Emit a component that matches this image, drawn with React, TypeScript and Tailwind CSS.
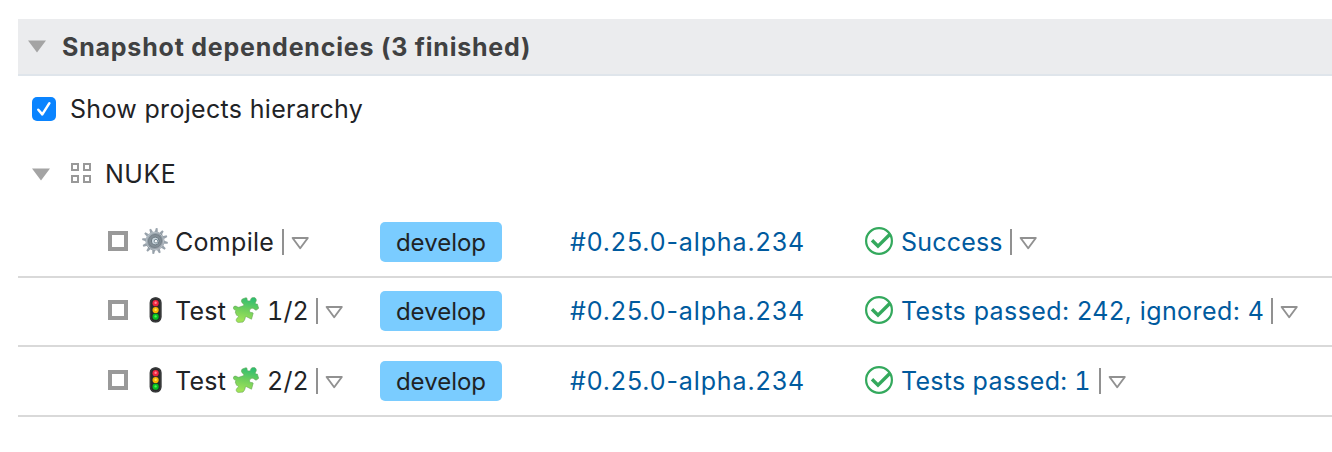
import type { ReactNode } from "react";

function Caret() {
  return (
    <svg width="18" height="13" viewBox="0 0 18 13" className="block shrink-0">
      <path d="M0 0.5H18L9 12.5Z" fill="#a4a4a4" />
    </svg>
  );
}

function MenuHandle() {
  return (
    <span className="flex shrink-0 items-center">
      <span className="h-[26px] w-[2px] bg-[#919191]" />
      <svg width="18" height="13" viewBox="0 0 18 13" className="mt-[3px] ml-[7px] block">
        <path d="M1.6 1H16.8L9.2 11.2Z" fill="none" stroke="#919191" strokeWidth="1.9" strokeLinejoin="round" />
      </svg>
    </span>
  );
}

function ProjectIcon() {
  return (
    <svg width="20" height="20" viewBox="0 0 20 20" className="block shrink-0" fill="none" stroke="#999999" strokeWidth="2">
      <path d="M1 1H7V7H1ZM13 1H19V7H13ZM1 13H7V19H1ZM13 13H19V19H13Z" />
    </svg>
  );
}

function StatusIcon() {
  return (
    <svg width="28" height="28" viewBox="0 0 28 28" className="mb-[2px] block shrink-0" fill="none" stroke="#34a95d">
      <circle cx="14" cy="14" r="12.9" strokeWidth="2.2" />
      <path d="M7 13.2L13 19.1L25.5 6.8" strokeWidth="3.4" />
    </svg>
  );
}

const teeth = Array.from({ length: 12 }, (_, i) => i * 30);

function Gear() {
  return (
    <svg width="26" height="26" viewBox="0 0 26 26" className="mb-[2px] block shrink-0">
      <defs>
        <linearGradient id="steel" x1="0" y1="0" x2="1" y2="1">
          <stop offset="0" stopColor="#b3bec6" />
          <stop offset="0.5" stopColor="#87929a" />
          <stop offset="1" stopColor="#b0b3bb" />
        </linearGradient>
      </defs>
      {teeth.map((angle) => (
        <path key={angle} d="M11.4 4.5L12.1 0.1H13.9L14.6 4.5Z" fill="#98a2ab" transform={`rotate(${angle + 8} 13 13)`} />
      ))}
      <circle cx="13" cy="13" r="9.6" fill="url(#steel)" />
      <circle cx="13" cy="13" r="8.6" fill="none" stroke="#b7c0c7" strokeWidth="1" />
      <circle cx="13" cy="13" r="6.5" fill="#848f97" stroke="#707b84" strokeWidth="0.8" />
      <circle cx="13.2" cy="13" r="3.9" fill="#c9d5dd" stroke="#5b6871" strokeWidth="0.8" />
      <circle cx="14" cy="13.2" r="1.8" fill="#f7f9fb" stroke="#71838f" strokeWidth="0.9" />
    </svg>
  );
}

function TrafficLight() {
  return (
    <svg width="26" height="26" viewBox="0 0 26 26" className="mb-[2px] block shrink-0">
      <rect x="7.6" y="0.2" width="12" height="25.4" rx="5.5" fill="#292a2c" />
      <rect x="8.5" y="1.1" width="10.2" height="23.6" rx="4.8" fill="none" stroke="#414244" strokeWidth="0.8" />
      <circle cx="13.6" cy="6.2" r="3.1" fill="#ef2340" />
      <circle cx="13.6" cy="5.8" r="1.2" fill="#ff8895" />
      <circle cx="13.6" cy="13" r="3.1" fill="#f7b500" />
      <circle cx="13.6" cy="12.7" r="1.2" fill="#ffe35b" />
      <circle cx="13.6" cy="19.7" r="3.1" fill="#08bd1e" />
      <circle cx="13.6" cy="19.4" r="1.2" fill="#4df05c" />
    </svg>
  );
}

function Puzzle() {
  return (
    <svg width="26" height="26" viewBox="0 0 26 26" className="mb-[2px] block shrink-0">
      <defs>
        <linearGradient id="leaf" x1="0.6" y1="0" x2="0.4" y2="1">
          <stop offset="0" stopColor="#2dbd72" />
          <stop offset="0.5" stopColor="#70cf5c" />
          <stop offset="1" stopColor="#a4e557" />
        </linearGradient>
      </defs>
      <path
        d="M9.3 2L13 0.7C14.6 .6 13.6 2.9 14.8 3.7C16.1 4.4 17.3 3.8 17.7 2.4C18.1 .7 19.9 0 21.5.6C23.4 1.4 23.8 3.5 22.7 4.9C21.7 6.3 22.8 7.3 24.3 7L25.7 11.3L23.4 13C21.6 13.5 21.7 11.6 19.8 11.3C17.7 10.9 16 12.7 16.6 14.5C17.2 16 19.1 14.9 20.2 16.2L18.5 22.2L13.5 19.7C11.8 19.3 12.6 21 11.5 23.1L10 25.1L5.3 25.4C2.6 24.9 2.7 21.9 4.6 20.7C6.4 19.5 4.6 18.4 3.6 18.3L2.2 15C3.5 13.6 2.6 13.2 1.2 12.6C-.4 11.5.1 9.5 2 9.1C3.8 8.9 4.6 10.6 5.8 10.3L10.2 8.8C11.2 8 11 7.1 9.8 6.4C8.4 5.5 7.8 3.3 9.3 2Z"
        fill="url(#leaf)"
        stroke="#65a655"
        strokeWidth="0.6"
      />
    </svg>
  );
}

type Build = { icon: ReactNode; name: ReactNode; status: string; statusClass: string; rowClass: string };

const testName = (part: string) => (
  <>
    <span className="w-[58px] tracking-[0.3px]">Test</span>
    <Puzzle />
    <span className="ml-[8px] w-[49px] tracking-[0.2px] tabular-nums">{part}</span>
  </>
);

const builds: Build[] = [
  {
    icon: <Gear />,
    name: <span className="w-[107px] tracking-[0.3px]">Compile</span>,
    status: "Success",
    statusClass: "w-[109px] tracking-[0.2px]",
    rowClass: "h-[70px]",
  },
  {
    icon: <TrafficLight />,
    name: testName("1/2"),
    status: "Tests passed: 242, ignored: 4",
    statusClass: "w-[370px] tracking-[0.42px]",
    rowClass: "h-[69px] pb-[1px]",
  },
  {
    icon: <TrafficLight />,
    name: testName("2/2"),
    status: "Tests passed: 1",
    statusClass: "w-[198px] tracking-[0.3px] tabular-nums",
    rowClass: "h-[70px]",
  },
];

function BuildRow({ build }: { build: Build }) {
  return (
    <div className={`flex items-center border-b-2 border-[#d9d9d9] ${build.rowClass}`}>
      <div className="flex w-[362px] items-center pl-[90px]">
        <span className="mr-[14px] mb-[2px] size-[20px] border-4 border-[#999999]" />
        {build.icon}
        <span className="ml-[7px] flex items-center">{build.name}</span>
        <MenuHandle />
      </div>
      <span className="flex h-[40px] w-[122px] items-center justify-center rounded-[5px] bg-[#7accff] pt-px text-[24px]">
        <span>develop</span>
      </span>
      <span className="ml-[68px] w-[295px] tracking-[0.88px] text-[#005a9e]">#0.25.0-alpha.234</span>
      <StatusIcon />
      <span className={`ml-[8px] text-[#005a9e] ${build.statusClass}`}>{build.status}</span>
      <MenuHandle />
    </div>
  );
}

export default function App() {
  return (
    <main className="h-[452px] overflow-hidden bg-white pt-[19px] pl-[18px] font-['Inter',sans-serif] text-[25px] leading-[32px] whitespace-nowrap text-[#1f2326]">
      <header className="flex h-[57px] items-center border-b-2 border-[#dfe5eb] bg-[#ebecee] pl-[10px]">
        <Caret />
        <h2 className="ml-[16px] font-bold tracking-[0.79px] text-[#404142]">Snapshot dependencies (3 finished)</h2>
      </header>
      <label className="flex h-[66px] items-center pl-[14px]">
        <span className="flex size-[24px] items-center justify-center rounded-[5px] bg-[#0a84ff]">
          <svg width="24" height="24" viewBox="0 0 24 24" fill="none" stroke="white" strokeWidth="2.5" strokeLinecap="round" strokeLinejoin="round">
            <path d="M6.3 12.8L10.3 17.4L17.4 6.2" />
          </svg>
        </span>
        <span className="ml-[14px] tracking-[0.32px]">Show projects hierarchy</span>
      </label>
      <div className="flex h-[66px] items-center pb-[2px] pl-[14px]">
        <Caret />
        <span className="mr-[14px] mb-[2px] ml-[21px]">
          <ProjectIcon />
        </span>
        <span className="tracking-[0.5px]">NUKE</span>
      </div>
      {builds.map((build, i) => (
        <BuildRow key={i} build={build} />
      ))}
    </main>
  );
}
